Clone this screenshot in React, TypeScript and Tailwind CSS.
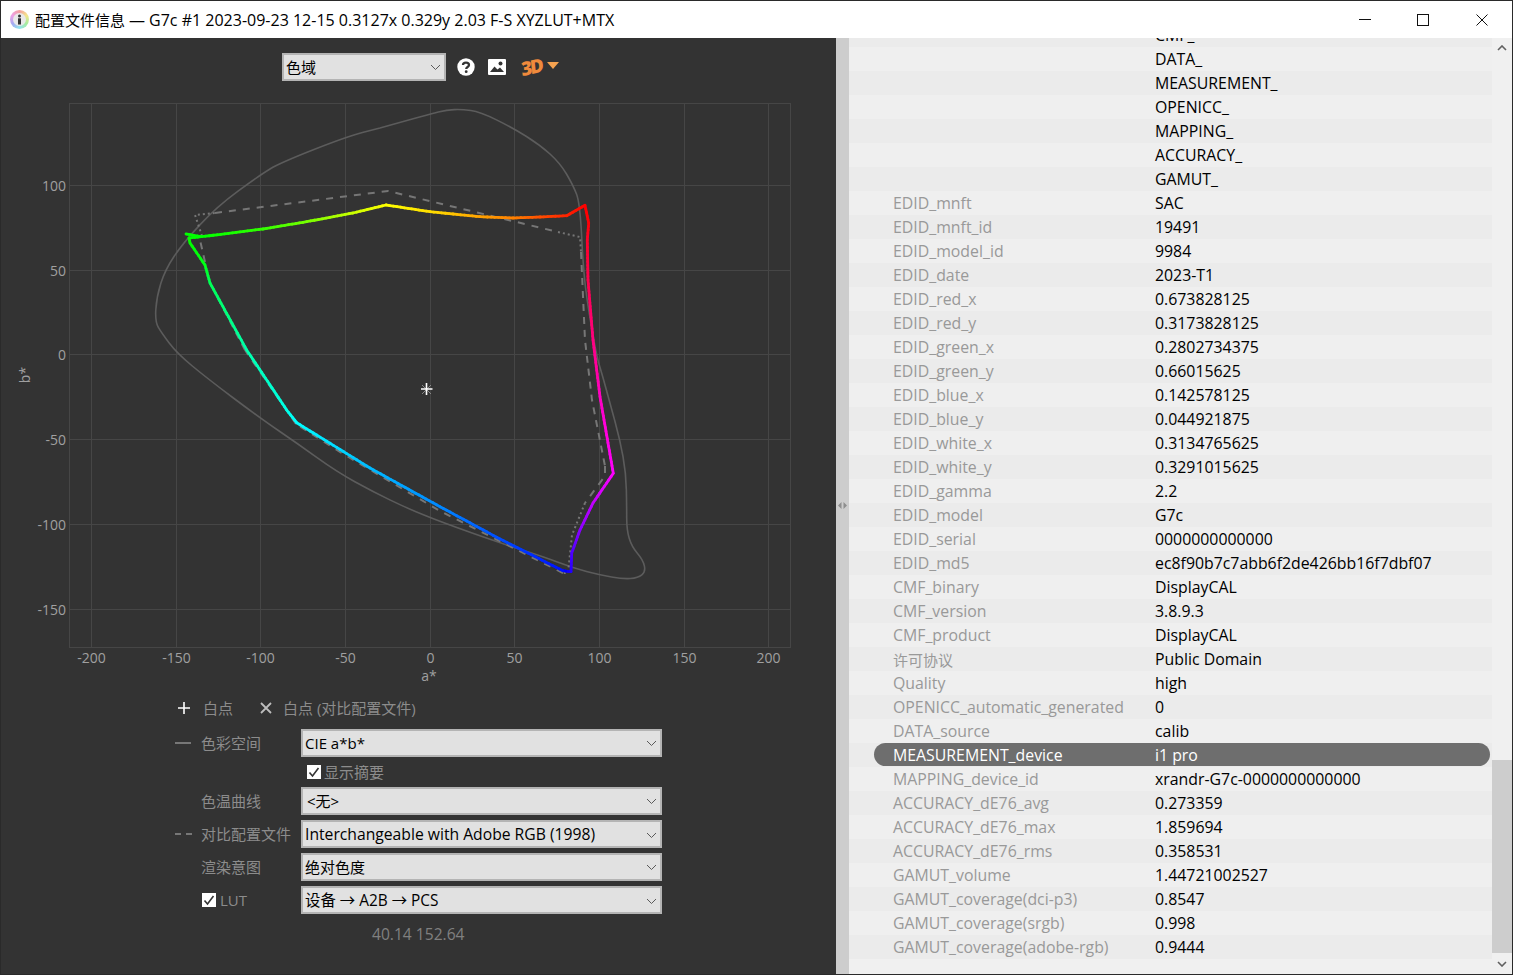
import React from "react";

type P = [number, number];
type H = [number, number, number];

const smooth = (pts: P[]) => {
  let d = `M${pts[0][0]} ${pts[0][1]}`;
  for (let i = 1; i < pts.length - 1; i++) {
    const mx = (pts[i][0] + pts[i + 1][0]) / 2;
    const my = (pts[i][1] + pts[i + 1][1]) / 2;
    d += ` Q${pts[i][0]} ${pts[i][1]} ${mx} ${my}`;
  }
  const l = pts[pts.length - 1];
  return d + ` L${l[0]} ${l[1]}`;
};

const outer: P[] = [
  [380, 128], [430, 114], [446.7, 110], [461.7, 109.3], [480, 111.7], [513, 128], [540, 145], [560, 163], [573, 185], [580, 203], [583.3, 270], [588, 306.7], [596.7, 356.7], [601.7, 373], [610, 403], [620, 440], [626, 473], [626.7, 506.7], [626.7, 530], [631.7, 546.7], [643, 560], [645.7, 571.7], [638, 578], [623, 579], [600, 575], [573, 568], [543, 556.7], [500, 543], [440, 521.7], [406.7, 508], [373, 491.7], [336.7, 471.7], [296.7, 443], [260, 418], [206.7, 378], [176.7, 353], [161.7, 333], [155, 321.7], [156.7, 296.7], [165, 270], [183, 243], [216.7, 206.7], [260, 175], [280, 163], [346.7, 136.7], [380, 128],
];

// x, y, hue
const curve: H[] = [
  [186, 234, 120], [201.7, 236.7, 120], [263, 229, 108], [306.7, 221.7, 92], [353, 213, 72], [386, 205, 60],
  [430, 211.7, 52], [480, 216.7, 38], [513, 218, 30], [540, 217, 18], [566.7, 215.7, 8], [585, 205.3, 0],
  [588.7, 223, 358], [587.3, 240, 350], [588, 280, 342], [593, 340, 330], [600, 396.7, 314], [613.3, 473.3, 300],
  [593, 503, 285], [580, 530, 272], [571.7, 553, 258], [571, 571.7, 248], [563, 570.7, 236], [500, 539, 222],
  [440, 506.7, 208], [370, 468, 196], [296.7, 422.7, 180], [286.7, 410, 174], [246.7, 350, 160], [210, 283, 140],
  [205, 265, 125], [190, 243, 120], [189, 238, 120], [201, 236.7, 120],
];

const segments = () => {
  const out: { a: P; b: P; c: string }[] = [];
  for (let i = 0; i < curve.length - 1; i++) {
    const [x0, y0, h0] = curve[i];
    const [x1, y1, h1] = curve[i + 1];
    let dh = h1 - h0;
    if (dh > 180) dh -= 360;
    if (dh < -180) dh += 360;
    const n = Math.max(1, Math.ceil(Math.hypot(x1 - x0, y1 - y0) / 4));
    for (let k = 0; k < n; k++) {
      const t0 = k / n;
      const t1 = (k + 1) / n;
      out.push({
        a: [x0 + (x1 - x0) * t0, y0 + (y1 - y0) * t0],
        b: [x0 + (x1 - x0) * t1, y0 + (y1 - y0) * t1],
        c: `hsl(${(h0 + dh * t0 + 360) % 360} 100% 50%)`,
      });
    }
  }
  return out;
};

const xt: [number, string][] = [[92, "-200"], [177, "-150"], [261, "-100"], [346, "-50"], [431, "0"], [515, "50"], [600, "100"], [685, "150"], [769, "200"]];
const yt: [number, string][] = [[186, "100"], [271, "50"], [355, "0"], [440, "-50"], [525, "-100"], [610, "-150"]];

const font = "font-['Open_Sans','Noto_Sans_CJK_SC',sans-serif]";
const hasCjk = (s: string) => /[\u4e00-\u9fff]/.test(s);

function Chart() {
  return (
    <svg viewBox="1 96 835 594" width={835} height={594} className="block shrink-0">
      <rect x={69.5} y={103.5} width={721} height={544} fill="none" stroke="#464646" />
      {xt.map(([x]) => <line key={x} x1={x - 0.5} x2={x - 0.5} y1={103} y2={647} stroke="#464646" />)}
      {yt.map(([y]) => <line key={y} x1={69} x2={790} y1={y - 0.5} y2={y - 0.5} stroke="#464646" />)}
      {xt.map(([x, t]) => <text key={x} x={x - 0.5} y={663} textAnchor="middle" fontSize={14} fill="#a0a0a0" fontFamily="Open Sans">{t}</text>)}
      {yt.map(([y, t]) => <text key={y} x={66} y={y + 5} textAnchor="end" fontSize={14} fill="#a0a0a0" fontFamily="Open Sans">{t}</text>)}
      <text x={429} y={681} textAnchor="middle" fontSize={14} fill="#a0a0a0" fontFamily="Open Sans">a*</text>
      <text x={0} y={0} transform="translate(30 375) rotate(-90)" textAnchor="middle" fontSize={14} fill="#a0a0a0" fontFamily="Open Sans">b*</text>
      <path d={smooth(outer)} fill="none" stroke="#5c5c5c" strokeWidth={1.6} />
      <path d="M215 213 L388 191 L558 232" fill="none" stroke="#767676" strokeWidth={2} strokeDasharray="7 7" />
      <path d="M202 236 L195 215 L215 213 M558 232 L580 237 L581 252" fill="none" stroke="#767676" strokeWidth={2} strokeDasharray="2 3" />
      <path d="M581 252 L585 340 L592 400 L605 466 M205 262 L200 240 M245 350 L210 283" fill="none" stroke="#767676" strokeWidth={2} strokeDasharray="7 6" />
      <path d="M605 466 L605 476 L585 503 M296 424 L245 350 M563 573 L440 511 L340 452 L296 424" fill="none" stroke="#767676" strokeWidth={2} strokeDasharray="7 7" />
      <path d="M585 503 L572 535 L568 573 L561 573" fill="none" stroke="#767676" strokeWidth={2} strokeDasharray="2 3" />
      {segments().map((s, i) => (
        <line key={i} x1={s.a[0]} y1={s.a[1]} x2={s.b[0]} y2={s.b[1]} stroke={s.c} strokeWidth={2.8} strokeLinecap="round" />
      ))}
      <path d="M422 385 L431 394 M431 385 L422 394" stroke="#8a8a8a" strokeWidth={1} />
      <path d="M426.5 383 V395 M421 389 H432.5" stroke="#ffffff" strokeWidth={1.6} />
    </svg>
  );
}

function Chevron({ className = "" }: { className?: string }) {
  return (
    <svg width={11} height={7} viewBox="0 0 11 7" className={className}>
      <path d="M1 1 L5.5 5.5 L10 1" fill="none" stroke="#5a5a5a" strokeWidth={1} />
    </svg>
  );
}

function Select({ text, className = "", size = "text-[15px]" }: { text: string; className?: string; size?: string }) {
  return (
    <div className={`flex h-[28px] items-center justify-between border-2 border-[#b4b4b4] bg-[#e1e1e1] pl-[2px] pr-[3px] text-black ${size} ${className}`}>
      <span className="whitespace-nowrap">{text}</span>
      <Chevron />
    </div>
  );
}

function Check() {
  return (
    <span className="flex h-[14px] w-[14px] items-center justify-center bg-white">
      <svg width={12} height={12} viewBox="0 0 12 12">
        <path d="M1.5 6.5 L4.5 10 L10.5 2" fill="none" stroke="#333" strokeWidth={1.6} />
      </svg>
    </span>
  );
}

const rows: [string, string][] = [
  ["", "CMF_"], ["", "DATA_"], ["", "MEASUREMENT_"], ["", "OPENICC_"], ["", "MAPPING_"], ["", "ACCURACY_"], ["", "GAMUT_"],
  ["EDID_mnft", "SAC"], ["EDID_mnft_id", "19491"], ["EDID_model_id", "9984"], ["EDID_date", "2023-T1"],
  ["EDID_red_x", "0.673828125"], ["EDID_red_y", "0.3173828125"], ["EDID_green_x", "0.2802734375"], ["EDID_green_y", "0.66015625"],
  ["EDID_blue_x", "0.142578125"], ["EDID_blue_y", "0.044921875"], ["EDID_white_x", "0.3134765625"], ["EDID_white_y", "0.3291015625"],
  ["EDID_gamma", "2.2"], ["EDID_model", "G7c"], ["EDID_serial", "0000000000000"], ["EDID_md5", "ec8f90b7c7abb6f2de426bb16f7dbf07"],
  ["CMF_binary", "DisplayCAL"], ["CMF_version", "3.8.9.3"], ["CMF_product", "DisplayCAL"], ["许可协议", "Public Domain"],
  ["Quality", "high"], ["OPENICC_automatic_generated", "0"], ["DATA_source", "calib"], ["MEASUREMENT_device", "i1 pro"],
  ["MAPPING_device_id", "xrandr-G7c-0000000000000"], ["ACCURACY_dE76_avg", "0.273359"], ["ACCURACY_dE76_max", "1.859694"],
  ["ACCURACY_dE76_rms", "0.358531"], ["GAMUT_volume", "1.44721002527"], ["GAMUT_coverage(dci-p3)", "0.8547"],
  ["GAMUT_coverage(srgb)", "0.998"], ["GAMUT_coverage(adobe-rgb)", "0.9444"],
];

function Row({ k, v, i }: { k: string; v: string; i: number }) {
  const selected = k === "MEASUREMENT_device";
  return (
    <div className={`relative flex h-6 shrink-0 items-center pt-[2px] text-[15.85px] ${i % 2 === 0 ? "bg-[#ebebeb]" : "bg-[#efefef]"} ${i === 0 ? "-mt-[15px]" : ""}`}>
      {selected && <div className="absolute bottom-[1px] left-[25px] right-[2px] top-0 rounded-full bg-[#6e6e6e]" />}
      <div className={`relative w-[306px] whitespace-nowrap pl-[44px] ${hasCjk(k) ? "text-[15px]" : ""} ${selected ? "text-white" : "text-[#999999]"}`}>{k}</div>
      <div className={`relative whitespace-nowrap ${selected ? "text-white" : "text-black"}`}>{v}</div>
    </div>
  );
}

export default function App() {
  return (
    <div className={`flex h-[975px] w-[1513px] flex-col overflow-hidden border border-[#2a2a2a] bg-[#333333] ${font}`}>
      <header className="flex h-[37px] shrink-0 items-center bg-white">
        <div className="ml-[9px] flex h-[19px] w-[19px] items-center justify-center rounded-full bg-[conic-gradient(#f3a0a0,#f5e58a,#a6ec9c,#93e3ee,#a7a9f2,#efa0e4,#f3a0a0)]">
          <svg width={13} height={13} viewBox="0 0 13 13">
            <circle cx={6.5} cy={6.5} r={6.5} fill="#e9e9e9" />
            <circle cx={6.5} cy={3} r={1.5} fill="#333" />
            <rect x={5} y={5.3} width={3} height={6.2} fill="#333" />
          </svg>
        </div>
        <div className="ml-[6px] whitespace-nowrap text-[15px] text-black">
          配置文件信息 <span className="text-[16px]">— G7c #1 2023-09-23 12-15 0.3127x 0.329y 2.03 F-S XYZLUT+MTX</span>
        </div>
        <div className="ml-auto flex items-center">
          <svg width={12} height={12} viewBox="0 0 12 12" className="mr-[46px]"><path d="M0 5.5 H12" stroke="#111" /></svg>
          <svg width={12} height={12} viewBox="0 0 12 12" className="mr-[47px]"><rect x={0.5} y={0.5} width={11} height={11} fill="none" stroke="#111" /></svg>
          <svg width={12} height={12} viewBox="0 0 12 12" className="mr-[24px]"><path d="M0.5 0.5 L11.5 11.5 M11.5 0.5 L0.5 11.5" stroke="#111" /></svg>
        </div>
      </header>

      <main className="flex min-h-0 flex-1">
        <section className="flex w-[835px] shrink-0 flex-col">
          <div className="flex h-[58px] shrink-0 items-center justify-center pl-[4px]">
            <Select text="色域" className="w-[164px]" />
            <svg width={18} height={18} viewBox="0 0 18 18" className="ml-[11px]">
              <circle cx={9} cy={9} r={8.7} fill="#fff" />
              <path d="M6 7 C6 3.8 12 3.8 12 7 C12 9 9.2 9 9.2 11" fill="none" stroke="#333" strokeWidth={2.3} />
              <circle cx={9.2} cy={13.7} r={1.4} fill="#333" />
            </svg>
            <svg width={18} height={16} viewBox="0 0 18 16" className="ml-[13px]">
              <rect width={18} height={16} rx={1} fill="#fff" />
              <path d="M2 13 L6.5 7.5 L9.5 10.5 L12 8.5 L16 13 Z" fill="#333" />
              <circle cx={12.5} cy={4.5} r={2} fill="#333" />
            </svg>
            <span className="ml-[15px] -rotate-12 -skew-x-6 text-[19px] font-extrabold leading-none tracking-[-2px] text-[#ef8a3c]">3D</span>
            <svg width={12} height={7} viewBox="0 0 12 7" className="mb-[3px] ml-[5px]"><path d="M0 0 H12 L6 7 Z" fill="#f6a350" /></svg>
          </div>

          <Chart />

          <div className="ml-[176px] flex h-[36px] w-[486px] shrink-0 items-center text-[15px] text-[#8c8c8c]">
            <svg width={14} height={14} viewBox="0 0 14 14"><path d="M7 1 V13 M1 7 H13" stroke="#fff" strokeWidth={1.6} /></svg>
            <span className="ml-[12px]">白点</span>
            <svg width={14} height={14} viewBox="0 0 14 14" className="ml-[26px]"><path d="M2 2 L12 12 M12 2 L2 12" stroke="#bdbdbd" strokeWidth={1.8} /></svg>
            <span className="ml-[10px]">白点 (对比配置文件)</span>
          </div>

          <div className="ml-[174px] mt-[3px] grid w-[487px] grid-cols-[126px_1fr] items-center text-[15px] text-[#8c8c8c]">
            <div className="flex h-[28px] items-center">
              <span className="w-[26px]"><span className="block h-[1.5px] w-[16px] bg-[#777]" /></span>
              <span>色彩空间</span>
            </div>
            <Select text="CIE a*b*" />

            <div className="col-start-2 ml-[6px] flex h-[30px] items-center gap-[3px]">
              <Check />
              <span>显示摘要</span>
            </div>

            <div className="flex h-[28px] items-center pl-[26px]">色温曲线</div>
            <Select text="<无>" className="[&>span]:pl-[2px]" />

            <div className="mt-[5px] flex h-[28px] items-center">
              <span className="flex w-[26px] gap-[5px]"><span className="block h-[1.5px] w-[6px] bg-[#777]" /><span className="block h-[1.5px] w-[6px] bg-[#777]" /></span>
              <span className="whitespace-nowrap">对比配置文件</span>
            </div>
            <Select text="Interchangeable with Adobe RGB (1998)" className="mt-[5px] pt-[2px]" size="text-[15.7px]" />

            <div className="mt-[5px] flex h-[28px] items-center pl-[26px]">渲染意图</div>
            <Select text="绝对色度" className="mt-[5px]" />

            <div className="mt-[5px] flex h-[28px] items-center gap-[4px] pl-[27px]">
              <Check />
              <span>LUT</span>
            </div>
            <Select text="设备 → A2B → PCS" className="mt-[5px] pt-[2px]" size="text-[15.4px]" />
          </div>

          <div className="ml-[371px] mt-[9px] whitespace-nowrap text-[15.6px] text-[#808080]">40.14 152.64</div>
        </section>

        <div className="relative w-[13px] shrink-0 bg-[#cdcdcd]">
          <svg width={9} height={7} viewBox="0 0 9 7" className="absolute left-[2px] top-[464px]">
            <path d="M3.5 0 V7 L0 3.5 Z M5.5 0 V7 L9 3.5 Z" fill="#8e8e8e" />
          </svg>
        </div>

        <section className="flex min-w-0 flex-1 flex-col overflow-hidden bg-[#f0f0f0]">
          {rows.map(([k, v], i) => <Row key={i} k={k} v={v} i={i} />)}
        </section>

        <aside className="flex w-[20px] shrink-0 flex-col bg-[#f0f0f0]">
          <div className="flex h-[20px] shrink-0 items-center justify-center">
            <svg width={10} height={6} viewBox="0 0 10 6"><path d="M1 5 L5 1 L9 5" fill="none" stroke="#606060" strokeWidth={1.6} /></svg>
          </div>
          <div className="h-[702px] shrink-0" />
          <div className="h-[193px] shrink-0 bg-[#cdcdcd]" />
          <div className="flex flex-1 items-center justify-center">
            <svg width={10} height={6} viewBox="0 0 10 6"><path d="M1 1 L5 5 L9 1" fill="none" stroke="#606060" strokeWidth={1.6} /></svg>
          </div>
        </aside>
      </main>
    </div>
  );
}
